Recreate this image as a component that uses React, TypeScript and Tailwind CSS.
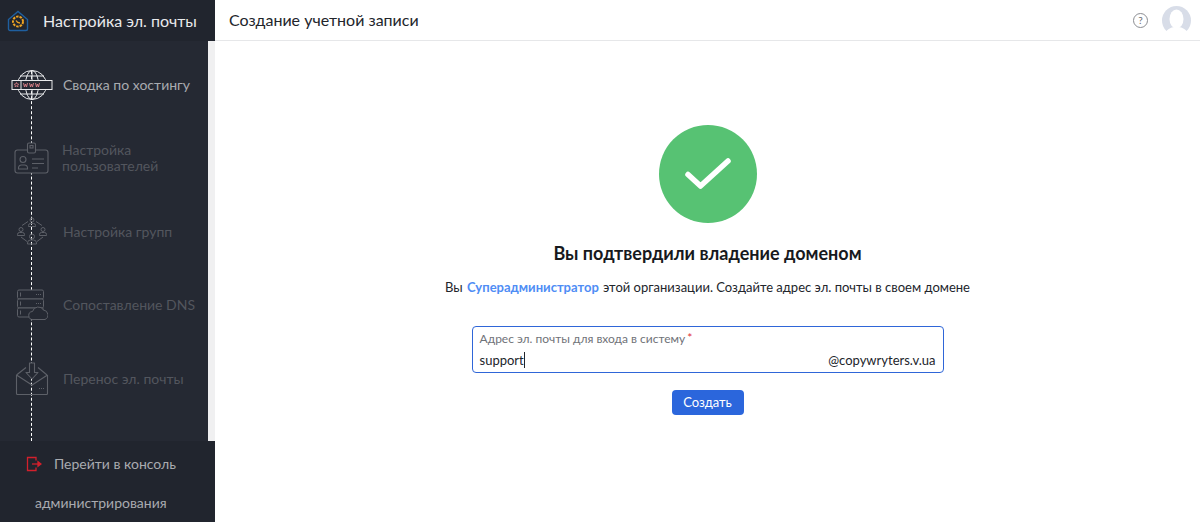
import React from 'react';

const font = "font-['Lato','Noto_Sans',sans-serif]";

function Logo() {
  return (
    <svg width="22" height="22" viewBox="0 0 22 22" fill="none" className="shrink-0">
      <path d="M1.5 9.5 11 1.5l9.5 8v9.5a1.5 1.5 0 0 1-1.5 1.5H3a1.5 1.5 0 0 1-1.5-1.5z" stroke="#1f5f9f" strokeWidth="1.4" />
      <circle cx="11" cy="11.5" r="5" stroke="#eda323" strokeWidth="2" strokeDasharray="2.5 1" />
      <path d="M9 10.5c1 2 2.500 2.500 4 2.500" stroke="#eda323" strokeWidth="1.3" />
    </svg>
  );
}

function GlobeIcon() {
  return (
    <svg width="42" height="34" viewBox="0 0 42 34" fill="none" stroke="#e8e9eb" strokeWidth="1">
      <circle cx="21" cy="17" r="14.500" />
      <ellipse cx="21" cy="17" rx="6.500" ry="14.500" />
      <path d="M21 2.500v29M9 8h24M9 26h24" />
      <rect x="1" y="12.500" width="40" height="9" fill="#252933" stroke="#e8e9eb" />
      <path d="M10 12.500v9" />
      <path d="m5.500 14.500.7 1.500 1.500.2-1 1 .3 1.500-1.500-.8-1.500.8.300-1.500-1-1 1.500-.2z" stroke="#e0828a" strokeWidth=".8" />
      <path d="m12.500 15 1 4 1-3 1 3 1-4M18.500 15l1 4 1-3 1 3 1-4M24.500 15l1 4 1-3 1 3 1-4" stroke="#e0828a" strokeWidth=".9" />
    </svg>
  );
}

function BadgeIcon() {
  return (
    <svg width="36" height="32" viewBox="0 0 36 32" fill="none" stroke="#5d6068" strokeWidth="1.100">
      <rect x="1" y="8" width="33" height="23" rx="2.500" fill="#252933" />
      <rect x="13.500" y="1" width="8" height="10" rx="1.500" fill="#252933" />
      <rect x="16" y="3.500" width="3" height="2.500" />
      <circle cx="9" cy="17.500" r="3" />
      <path d="M4.500 27v-1.500a3 3 0 0 1 3-2.500h3a3 3 0 0 1 3 2.500V27z" />
      <path d="M18 17h12M18 21.500h12M18 26h6" />
    </svg>
  );
}

function GroupIcon() {
  return (
    <svg width="32" height="32" viewBox="0 0 32 32" fill="none" stroke="#5d6068" strokeWidth="1">
      <circle cx="16" cy="4" r="2" />
      <path d="M12.500 10.500v-1a2 2 0 0 1 2-2h3a2 2 0 0 1 2 2v1z" />
      <circle cx="5" cy="13.500" r="2" />
      <path d="M1.500 19.500v-1a2 2 0 0 1 2-2h3a2 2 0 0 1 2 2v1z" />
      <circle cx="27" cy="13.500" r="2" />
      <path d="M23.500 19.500v-1a2 2 0 0 1 2-2h3a2 2 0 0 1 2 2v1z" />
      <circle cx="16" cy="20.500" r="2.500" />
      <path d="M11.500 28v-1a3 3 0 0 1 3-3h3a3 3 0 0 1 3 3v1z" />
      <path d="M6 9.500 12 5.500M26 9.500 20 5.500M5 21l6 4.500M27 21l-6 4.500" />
    </svg>
  );
}

function ServerIcon() {
  return (
    <svg width="32" height="32" viewBox="0 0 32 32" fill="none" stroke="#5d6068" strokeWidth="1">
      <rect x="1.500" y="1" width="26" height="9" rx="1.500" fill="#252933" />
      <rect x="1.500" y="10" width="26" height="9" rx="1.500" fill="#252933" />
      <rect x="1.500" y="19" width="26" height="9" rx="1.500" fill="#252933" />
      <path d="M4.500 3.500v4M4.500 12.500v4M4.500 21.500v4" />
      <path d="M20 5.500h5M20 14.500h5" strokeDasharray="1 1" />
      <path d="M17 30.500a4 4 0 0 1-.500-8 6 6 0 0 1 11-1.500 5 5 0 0 1 1.500 9.500z" fill="#252933" />
    </svg>
  );
}

function MailIcon() {
  return (
    <svg width="34" height="34" viewBox="0 0 34 34" fill="none" stroke="#5d6068" strokeWidth="1.100">
      <path d="M1.500 13 11 5.500M32 13 23 5.500M1.500 13v18.500a1 1 0 0 0 1 1h29a1 1 0 0 0 1-1V13M1.500 13l15.500 10 15.500-10" />
      <path d="M14.500 1h5v9.500h3.500L17 17l-6-6.500h3.500z" strokeLinejoin="round" fill="#252933" />
      <path d="M24 26.500h5" strokeDasharray="1 1" />
    </svg>
  );
}

function ExitIcon() {
  return (
    <svg width="16" height="16" viewBox="0 0 16 16" fill="none" stroke="#d3202c" strokeWidth="1.300">
      <path d="M10 4.500V1.500H1.500v13H10v-3" />
      <path d="M6 8h8.500" />
      <path d="m12 5.800 3 2.200-3 2.200z" fill="#d3202c" />
    </svg>
  );
}

function Step({ icon, label, active = false, iconClass = '' }: { icon: React.ReactNode; label: React.ReactNode; active?: boolean; iconClass?: string }) {
  return (
    <div className="relative z-10 h-[73.5px] flex items-center">
      <div className={`w-[63px] flex justify-center shrink-0 ${iconClass}`}>{icon}</div>
      <span className={`text-sm leading-4 ${active ? 'text-[#a9abb0]' : 'text-[#53565e]'}`}>{label}</span>
    </div>
  );
}

export default function App() {
  return (
    <div className={`h-[522px] w-[1200px] flex overflow-hidden bg-white ${font}`}>
      {/* sidebar */}
      <div className="w-[215px] shrink-0 flex flex-col bg-[#252933]">
        <div className="h-[41px] shrink-0 bg-[#21252e] flex items-center pl-[7px] gap-[14px]">
          <Logo />
          <span className="text-base text-[#e9eaec] whitespace-nowrap">Настройка эл. почты</span>
        </div>
        <div className="relative flex-1 min-h-0 overflow-hidden">
          <div className="absolute right-0 top-0 bottom-0 w-[7px] bg-[#f0f0f1]" />
          <div className="absolute left-[31px] top-[30px] bottom-0 border-l border-dashed border-white" />
          <div className="pt-[7px]">
            <Step active icon={<GlobeIcon />} label="Сводка по хостингу" iconClass="pr-0" />
            <Step icon={<BadgeIcon />} label={<span className="block -ml-[1px]">Настройка<br />пользователей</span>} />
            <Step icon={<GroupIcon />} label="Настройка групп" />
            <Step icon={<ServerIcon />} label="Сопоставление DNS" />
            <Step icon={<MailIcon />} label="Перенос эл. почты" />
          </div>
        </div>
        <div className="relative z-20 h-[81px] shrink-0 bg-[#21252e] text-sm text-[#a9abb0]">
          <div className="h-[46px] flex items-center pl-[26px] gap-[12px]">
            <ExitIcon />
            <span>Перейти в консоль</span>
          </div>
          <div className="pl-[35px] pt-[6px]">администрирования</div>
        </div>
      </div>

      {/* main */}
      <div className="flex-1 min-w-0 flex flex-col">
        <div className="h-[41px] shrink-0 border-b border-[#e6e7e9] flex items-center pl-[14px] pr-[9px]">
          <span className="text-base text-[#22252b] flex-1">Создание учетной записи</span>
          <span className="w-[15px] h-[15px] rounded-full border border-[#8b8d92] text-[10px] leading-none text-[#6b6d72] flex items-center justify-center mr-[14px]">?</span>
          <svg width="29" height="29" viewBox="0 0 29 29">
            <circle cx="14.500" cy="14.500" r="14.500" fill="#d8dde8" />
            <ellipse cx="14.500" cy="13" rx="7" ry="9.500" fill="#ffffff" />
            <path d="M3 27c3-5 7-6 11.500-6s8.500 1 11.500 6a14.500 14.500 0 0 1-23 0z" fill="#ffffff" />
          </svg>
        </div>
        <div className="flex flex-col items-center pt-[84px]">
          <div className="w-[98px] h-[98px] rounded-full bg-[#57c273] flex items-center justify-center">
            <svg width="48" height="36" viewBox="0 0 48 36" fill="none">
              <path d="M4 18.500 16.500 30 44 5" stroke="#ffffff" strokeWidth="5.500" strokeLinecap="round" strokeLinejoin="round" />
            </svg>
          </div>
          <h1 className="mt-[18px] text-[18px] leading-6 font-bold text-[#17191d]">Вы подтвердили владение доменом</h1>
          <p className="mt-[12px] text-[13px] leading-5 text-[#22252b]">
            Вы <span className="font-bold text-[#4f8df5] mx-[1px]">Суперадминистратор</span> этой организации. Создайте адрес эл. почты в своем домене
          </p>
          <div className="mt-[29px] w-[472px] h-[47px] rounded-[4px] border border-[#2f66d8] px-[7px] pt-[4px]">
            <div className="text-xs leading-4 text-[#6f7278]">
              Адрес эл. почты для входа в систему<span className="text-[#e0303a] ml-[2px] relative -top-[1px]">*</span>
            </div>
            <div className="flex justify-between items-center mt-[3px] text-[13px] leading-5 text-[#22252b]">
              <span className="flex items-center">support<span className="w-px h-[16px] bg-[#22252b]" /></span>
              <span>@copywryters.v.ua</span>
            </div>
          </div>
          <button className="mt-[17px] w-[72px] h-[25px] rounded-[4px] bg-[#2b66dc] text-[13px] text-white">Создать</button>
        </div>
      </div>
    </div>
  );
}
